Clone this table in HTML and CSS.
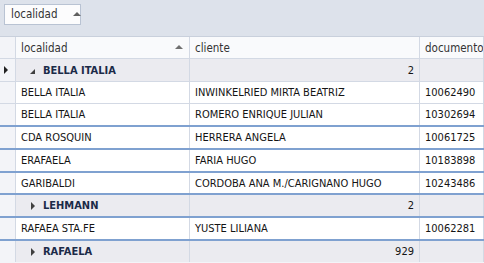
FILE: index.html
```html
<!DOCTYPE html>
<html>
<head>
<meta charset="utf-8">
<link rel="stylesheet" href="styles.css">
</head>
<body>
<div class="grid-wrap">
  <div class="group-panel">
    <div class="group-chip"><span>localidad</span><span class="chip-arrow"></span></div>
  </div>
  <div class="grid">
    <div class="row header">
      <div class="ind"></div>
      <div class="cell">localidad<span class="sort-arrow"></span></div>
      <div class="cell">cliente</div>
      <div class="cell">documento</div>
    </div>
    <div class="row group thin first">
      <div class="ind"><span class="focus-arrow"></span></div>
      <div class="cell gname"><span class="exp open"></span>BELLA ITALIA</div>
      <div class="cell num">2</div>
      <div class="cell"></div>
    </div>
    <div class="row data thin">
      <div class="ind"></div>
      <div class="cell">BELLA ITALIA</div>
      <div class="cell">INWINKELRIED MIRTA BEATRIZ</div>
      <div class="cell">10062490</div>
    </div>
    <div class="row data thick">
      <div class="ind"></div>
      <div class="cell">BELLA ITALIA</div>
      <div class="cell">ROMERO ENRIQUE JULIAN</div>
      <div class="cell">10302694</div>
    </div>
    <div class="row data thick">
      <div class="ind"></div>
      <div class="cell">CDA ROSQUIN</div>
      <div class="cell">HERRERA ANGELA</div>
      <div class="cell">10061725</div>
    </div>
    <div class="row data thick">
      <div class="ind"></div>
      <div class="cell">ERAFAELA</div>
      <div class="cell">FARIA HUGO</div>
      <div class="cell">10183898</div>
    </div>
    <div class="row data thick short">
      <div class="ind"></div>
      <div class="cell">GARIBALDI</div>
      <div class="cell">CORDOBA ANA M./CARIGNANO HUGO</div>
      <div class="cell">10243486</div>
    </div>
    <div class="row group thick">
      <div class="ind"></div>
      <div class="cell gname"><span class="exp closed"></span>LEHMANN</div>
      <div class="cell num">2</div>
      <div class="cell"></div>
    </div>
    <div class="row data thick">
      <div class="ind"></div>
      <div class="cell">RAFAEA STA.FE</div>
      <div class="cell">YUSTE LILIANA</div>
      <div class="cell">10062281</div>
    </div>
    <div class="row group">
      <div class="ind"></div>
      <div class="cell gname"><span class="exp closed"></span>RAFAELA</div>
      <div class="cell num">929</div>
      <div class="cell"></div>
    </div>
  </div>
</div>
</body>
</html>
```

FILE: styles.css
```css
html, body {
  margin: 0;
  padding: 0;
  overflow: hidden;
  background: #f3f4f8;
}
.grid-wrap {
  width: 484px;
  height: 263px;
  font-family: "DejaVu Sans Condensed", "DejaVu Sans", sans-serif;
  font-size: 11px;
  color: #141414;
}
.group-panel {
  height: 36px;
  background: #dde2eb;
  padding: 4px 0 0 4px;
  box-sizing: border-box;
}
.group-chip {
  width: 77px;
  height: 21px;
  box-sizing: border-box;
  background: #fcfcfd;
  border: 1px solid #b9c3d3;
  display: flex;
  align-items: center;
  padding-left: 6px;
  padding-bottom: 1px;
  color: #333;
  font-size: 11.5px;
}
.chip-arrow {
  margin-left: 16px;
  width: 0;
  height: 0;
  border-left: 4px solid transparent;
  border-right: 4px solid transparent;
  border-bottom: 4px solid #606060;
}
.grid {
  border-top: 1px solid #c9d0dc;
}
.row {
  display: grid;
  grid-template-columns: 16px 174px 230px 64px;
  height: 21px;
}
.row.thin { height: 22px; border-bottom: 1px solid #d3d9e4; box-sizing: border-box; }
.row.thin.first { height: 23px; }
.row.thick { height: 23px; border-bottom: 2px solid #7fa1d0; box-sizing: border-box; }
.row.thick.short { height: 22px; }
.row.header {
  height: 22px;
  box-sizing: border-box;
  border-bottom: 1px solid #d3d9e4;
  background: #f9fafc;
}
.ind {
  background: #f3f4f8;
  border-right: 1px solid #d3d9e4;
  display: flex;
  align-items: center;
  justify-content: center;
}
.cell {
  border-right: 1px solid #d3d9e4;
  padding-left: 5px;
  display: flex;
  align-items: center;
  white-space: nowrap;
  overflow: hidden;
}
.header .cell {
  color: #333;
  font-size: 11.5px;
  position: relative;
}
.sort-arrow {
  position: absolute;
  right: 6px;
  top: 8px;
  width: 0;
  height: 0;
  border-left: 4px solid transparent;
  border-right: 4px solid transparent;
  border-bottom: 4px solid #707070;
}
.data .cell { background: #ffffff; }
.group .cell { background: #ebebf0; }
.gname {
  font-weight: bold;
  color: #1b2a48;
  padding-left: 14px;
}
.num {
  justify-content: flex-end;
  padding-right: 5px;
}
.exp {
  display: inline-block;
  width: 0;
  height: 0;
  margin-right: 8px;
}
.exp.open {
  border-left: 5px solid transparent;
  border-bottom: 5px solid #404040;
  margin-top: 2px;
}
.exp.closed {
  border-top: 4px solid transparent;
  border-bottom: 4px solid transparent;
  border-left: 4px solid #404040;
  margin-left: 1px;
  margin-right: 8px;
}
.focus-arrow {
  width: 0;
  height: 0;
  border-top: 4px solid transparent;
  border-bottom: 4px solid transparent;
  border-left: 4px solid #222;
  margin-right: 3px;
}
```
